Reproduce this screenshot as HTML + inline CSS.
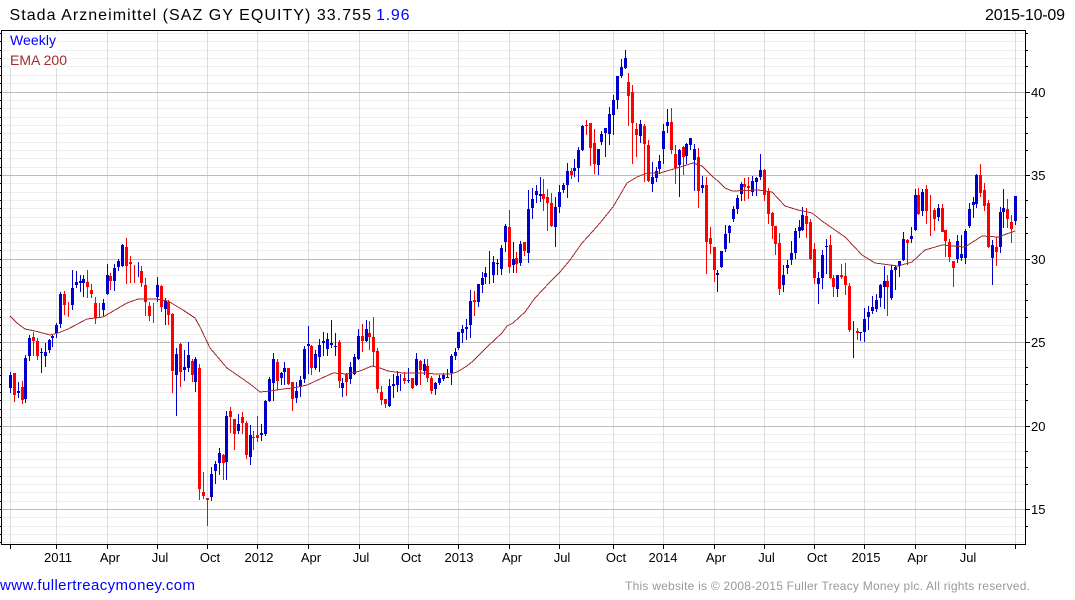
<!DOCTYPE html>
<html><head><meta charset="utf-8"><title>Stada Arzneimittel</title>
<style>
html,body{margin:0;padding:0;background:#fff;width:1075px;height:600px;overflow:hidden}
svg{display:block;position:absolute;left:0;top:0}
text{font-family:"Liberation Sans",Arial,sans-serif}
.c{shape-rendering:crispEdges;fill:none}
</style></head><body>
<svg width="1075" height="600" viewBox="0 0 1075 600" xmlns="http://www.w3.org/2000/svg">
<rect width="1075" height="600" fill="#fff"/>
<path class="c" stroke="#eee" d="M2 33.5H1025M2 41.5H1025M2 50.5H1025M2 58.5H1025M2 66.5H1025M2 75.5H1025M2 83.5H1025M2 100.5H1025M2 108.5H1025M2 117.5H1025M2 125.5H1025M2 133.5H1025M2 142.5H1025M2 150.5H1025M2 158.5H1025M2 167.5H1025M2 183.5H1025M2 192.5H1025M2 200.5H1025M2 208.5H1025M2 217.5H1025M2 225.5H1025M2 233.5H1025M2 242.5H1025M2 250.5H1025M2 267.5H1025M2 275.5H1025M2 284.5H1025M2 292.5H1025M2 300.5H1025M2 309.5H1025M2 317.5H1025M2 325.5H1025M2 334.5H1025M2 350.5H1025M2 359.5H1025M2 367.5H1025M2 375.5H1025M2 384.5H1025M2 392.5H1025M2 400.5H1025M2 409.5H1025M2 417.5H1025M2 434.5H1025M2 442.5H1025M2 451.5H1025M2 459.5H1025M2 467.5H1025M2 476.5H1025M2 484.5H1025M2 492.5H1025M2 501.5H1025M2 517.5H1025M2 526.5H1025M2 534.5H1025M2 542.5H1025"/>
<path class="c" stroke="#ddd" d="M10.5 31V544M56.5 31V544M107.5 31V544M157.5 31V544M207.5 31V544M257.5 31V544M308.5 31V544M359.5 31V544M408.5 31V544M458.5 31V544M509.5 31V544M559.5 31V544M613.5 31V544M663.5 31V544M714.5 31V544M764.5 31V544M814.5 31V544M864.5 31V544M915.5 31V544M965.5 31V544M1015.5 31V544"/>
<path class="c" stroke="#bbb" d="M2 92.5H1025M2 175.5H1025M2 259.5H1025M2 342.5H1025M2 426.5H1025M2 509.5H1025"/>
<rect x="10" y="32" width="47" height="19" fill="#fff"/>
<rect x="10" y="51" width="57" height="17" fill="#fff"/>

<path class="c" stroke="#0000cd" d="M10.5 372V393M18.5 382V398M25.5 355V403M29.5 335V361M41.5 348V373M45.5 343V367M49.5 339V353M52.5 335V347M56.5 323V338M60.5 292V328M72.5 270V310M76.5 271V288M80.5 275V292M83.5 275V297M103.5 299V316M107.5 264V295M114.5 264V291M118.5 259V271M122.5 244V267M138.5 262V277M157.5 277V302M165.5 298V325M176.5 348V416M184.5 350V381M188.5 342V372M195.5 357V392M211.5 467V501M215.5 461V484M219.5 448V475M226.5 411V480M238.5 414V434M250.5 425V465M261.5 424V441M265.5 400V436M269.5 377V402M273.5 353V401M281.5 372V385M284.5 362V385M296.5 382V403M300.5 376V397M304.5 346V383M308.5 326V374M315.5 350V370M319.5 339V372M323.5 332V356M327.5 333V356M331.5 320V348M335.5 333V356M342.5 378V397M350.5 362V384M354.5 354V375M358.5 329V360M366.5 320V342M389.5 379V407M393.5 374V398M397.5 371V392M400.5 374V391M408.5 368V383M416.5 353V386M424.5 359V375M435.5 382V395M439.5 375V385M443.5 373V381M447.5 369V378M451.5 354V385M455.5 348V360M458.5 332V350M462.5 325V343M466.5 319V340M470.5 290V338M478.5 284V307M482.5 272V293M485.5 267V284M489.5 251V284M493.5 256V283M497.5 259V275M501.5 245V275M505.5 224V252M513.5 242V273M520.5 241V266M528.5 190V263M532.5 188V219M536.5 185V203M540.5 177V202M555.5 197V247M559.5 185V213M563.5 183V193M567.5 163V198M574.5 159V177M578.5 147V182M582.5 125V151M598.5 149V175M601.5 131V145M605.5 128V157M609.5 107V145M613.5 95V135M617.5 76V109M621.5 59V78M625.5 50V69M640.5 120V143M652.5 162V192M656.5 167V182M659.5 155V174M663.5 124V164M667.5 109V133M679.5 149V197M686.5 143V164M690.5 138V150M694.5 144V191M702.5 176V193M717.5 270V292M721.5 251V268M725.5 225V252M729.5 225V243M733.5 206V222M737.5 195V214M741.5 182V201M752.5 176V196M756.5 177V196M760.5 154V180M783.5 265V292M787.5 260V274M791.5 241V265M795.5 228V259M799.5 220V238M802.5 207V231M818.5 272V304M822.5 250V289M826.5 239V274M837.5 275V297M853.5 321V358M860.5 332V341M864.5 308V342M868.5 306V330M872.5 296V314M876.5 294V312M880.5 284V307M884.5 266V309M891.5 265V300M895.5 265V290M899.5 261V277M903.5 232V261M911.5 227V243M915.5 189V231M922.5 189V216M938.5 204V221M957.5 235V263M961.5 235V261M965.5 229V264M969.5 203V228M973.5 197V218M976.5 174V208M992.5 240V285M1000.5 207V253M1003.5 189V228M1015.5 196V225"/>
<path class="c" stroke="#0000cd" stroke-width="3" d="M10.5 375V388M18.5 391V393M25.5 358V399M29.5 338V356M41.5 352V353M45.5 352V356M49.5 340V350M52.5 336V338M56.5 325V333M60.5 294V324M72.5 288V305M76.5 282V285M80.5 281V283M83.5 279V283M103.5 303V310M107.5 275V294M114.5 268V281M118.5 261V267M122.5 245V266M157.5 285V297M165.5 301V309M176.5 354V375M184.5 367V370M188.5 355V368M195.5 359V382M211.5 474V497M215.5 464V471M219.5 453V463M226.5 416V462M238.5 424V431M250.5 435V457M261.5 433V435M265.5 401V434M269.5 379V401M273.5 359V383M281.5 373V378M284.5 368V372M296.5 391V398M300.5 380V387M304.5 349V379M308.5 344V346M315.5 354V368M319.5 345V357M323.5 341V343M327.5 339V349M331.5 343V345M335.5 346V347M342.5 383V388M350.5 367V379M354.5 357V374M358.5 336V359M366.5 329V341M389.5 386V406M393.5 384V386M397.5 376V385M408.5 380V381M416.5 359V385M424.5 364V371M435.5 383V389M439.5 378V383M443.5 375V379M447.5 377V378M451.5 356V373M455.5 352V356M458.5 332V348M462.5 329V333M466.5 327V329M470.5 301V325M478.5 284V302M482.5 278V285M485.5 273V277M493.5 262V275M497.5 263V264M501.5 248V269M505.5 226V242M513.5 259V265M520.5 244V263M528.5 209V253M532.5 199V208M536.5 191V195M540.5 194V196M555.5 207V227M559.5 192V207M563.5 185V190M567.5 171V185M574.5 168V171M578.5 150V168M582.5 126V150M598.5 149V165M601.5 134V142M605.5 128V133M609.5 114V134M613.5 100V115M617.5 76V100M621.5 67V76M625.5 58V68M640.5 124V136M652.5 177V184M656.5 171V178M659.5 161V169M663.5 131V149M667.5 122V126M679.5 150V165M686.5 144V156M690.5 138V145M694.5 149V160M702.5 185V188M717.5 273V275M721.5 251V267M725.5 234V249M729.5 226V233M733.5 209V219M737.5 198V209M741.5 184V194M752.5 181V192M756.5 178V182M760.5 170V177M783.5 275V285M787.5 265V268M791.5 253V260M795.5 231V253M799.5 227V231M802.5 215V230M818.5 278V284M822.5 255V278M826.5 246V247M837.5 275V289M860.5 332V333M864.5 319V332M868.5 312V317M872.5 307V311M876.5 300V309M880.5 285V298M884.5 281V287M891.5 270V298M895.5 267V270M899.5 261V266M903.5 239V260M911.5 236V239M915.5 195V230M922.5 192V211M938.5 208V217M957.5 241V259M961.5 254V258M965.5 231V258M969.5 209V226M973.5 202V205M976.5 175V204M992.5 245V258M1000.5 212V247M1003.5 208V212M1015.5 196V221"/>

<path class="c" stroke="#f00" d="M14.5 373V402M22.5 381V404M33.5 332V356M37.5 338V360M64.5 291V315M68.5 302V317M87.5 270V298M91.5 284V298M95.5 297V324M99.5 303V317M110.5 273V290M126.5 238V284M130.5 256V283M134.5 265V283M141.5 266V287M145.5 278V316M149.5 302V321M153.5 303V323M161.5 285V312M168.5 300V325M172.5 313V393M180.5 343V387M192.5 359V382M199.5 364V500M203.5 472V499M207.5 498V526M223.5 454V480M230.5 407V433M234.5 419V450M242.5 412V434M246.5 421V459M253.5 431V450M257.5 416V442M277.5 359V390M288.5 368V385M292.5 382V411M311.5 345V375M339.5 340V388M346.5 373V396M362.5 324V352M369.5 321V350M373.5 317V367M377.5 348V393M381.5 386V405M385.5 399V408M404.5 372V384M412.5 378V389M420.5 360V385M427.5 359V382M431.5 376V394M474.5 291V316M509.5 210V273M516.5 252V273M524.5 242V256M543.5 179V211M547.5 189V231M551.5 193V227M571.5 168V179M586.5 120V135M590.5 123V166M594.5 129V174M628.5 73V126M632.5 85V164M636.5 123V157M644.5 124V182M648.5 140V182M671.5 108V154M675.5 145V184M683.5 146V175M698.5 148V208M706.5 177V274M710.5 227V254M714.5 247V282M744.5 178V201M748.5 177V199M764.5 169V201M768.5 188V224M772.5 212V239M775.5 226V255M779.5 233V295M806.5 208V238M810.5 219V260M814.5 243V284M830.5 235V279M833.5 275V297M841.5 264V279M845.5 263V295M849.5 283V332M857.5 328V340M887.5 275V316M907.5 239V265M918.5 188V215M926.5 185V224M930.5 195V236M934.5 208V231M942.5 204V232M945.5 230V257M949.5 239V262M953.5 261V287M980.5 164V197M984.5 183V211M988.5 200V248M996.5 237V266M1007.5 199V228M1011.5 215V243"/>
<path class="c" stroke="#f00" stroke-width="3" d="M14.5 373V395M22.5 387V400M33.5 337V341M37.5 341V356M64.5 294V305M87.5 282V287M91.5 290V294M95.5 303V318M110.5 276V281M126.5 247V266M130.5 262V264M141.5 271V283M145.5 285V302M149.5 306V316M161.5 286V307M168.5 302V315M172.5 314V371M180.5 344V372M192.5 361V375M199.5 368V489M203.5 492V496M207.5 498V500M223.5 455V463M230.5 411V417M234.5 419V434M242.5 417V423M246.5 423V455M253.5 437V438M257.5 435V438M277.5 362V381M288.5 368V384M292.5 382V399M311.5 346V368M339.5 342V381M346.5 374V382M362.5 336V341M369.5 333V337M373.5 337V352M377.5 351V389M381.5 392V400M385.5 399V404M404.5 378V381M412.5 378V388M420.5 361V370M427.5 366V378M431.5 378V391M474.5 300V302M509.5 227V267M516.5 258V264M524.5 242V251M543.5 194V199M547.5 197V203M551.5 203V226M571.5 171V175M586.5 125V126M590.5 123V148M594.5 143V164M628.5 82V96M632.5 92V123M636.5 129V135M644.5 126V144M648.5 145V181M671.5 122V150M675.5 154V168M683.5 147V157M698.5 157V191M706.5 185V242M710.5 238V244M714.5 247V270M744.5 184V187M748.5 186V188M764.5 170V195M768.5 192V214M772.5 213V226M775.5 226V244M779.5 243V289M806.5 216V224M810.5 222V259M814.5 249V278M830.5 245V278M833.5 278V287M841.5 275V277M845.5 276V285M849.5 286V330M857.5 331V333M887.5 281V287M907.5 240V243M918.5 195V214M926.5 189V211M934.5 210V219M942.5 208V232M945.5 230V241M949.5 242V257M953.5 261V268M980.5 175V193M984.5 190V206M988.5 203V247M996.5 247V252M1007.5 209V219M1011.5 222V229"/>

<polyline class="c" stroke="#a52a2a" stroke-width="1" points="10,316 17,323 25,329 35,331 50,335 58,333 68,329 87,319 103,317 115,310 127,303 138,299 155,299 168,301 183,310 195,318 200,327 210,348 227,368 240,377 250,384 260,392 270,391 283,389 293,388 307,385 320,379 333,373 347,374 360,371 372,366 380,368 388,371 403,373 427,373 435,374 450,374 457,372 467,366 473,361 487,347 502,333 507,326 513,323 525,312 535,298 550,282 560,272 570,260 582,243 593,231 600,223 613,207 627,183 637,177 647,173 660,173 677,168 693,163 702,166 713,177 718,181 725,188 732,191 758,190 772,192 785,206 798,210 812,213 822,221 845,237 862,255 875,263 898,266 912,262 925,250 942,245 965,247 982,236 998,237 1015,231"/>

<path class="c" stroke="#000" d="M1 30.5H1026M1 544.5H1026M1.5 30V545M1025.5 30V545"/>
<path class="c" stroke="#000" d="M10.5 544V549M56.5 544V549M107.5 544V549M157.5 544V549M207.5 544V549M257.5 544V549M308.5 544V549M359.5 544V549M408.5 544V549M458.5 544V549M509.5 544V549M559.5 544V549M613.5 544V549M663.5 544V549M714.5 544V549M764.5 544V549M814.5 544V549M864.5 544V549M915.5 544V549M965.5 544V549M1015.5 544V549"/>
<path class="c" stroke="#000" d="M1026 92.5H1030M1026 175.5H1030M1026 259.5H1030M1026 342.5H1030M1026 426.5H1030M1026 509.5H1030M1026 50.5H1028M1026 133.5H1028M1026 217.5H1028M1026 300.5H1028M1026 384.5H1028M1026 467.5H1028M1026 33.5H1028M1026 66.5H1028M1026 117.5H1028M1026 150.5H1028M1026 200.5H1028M1026 233.5H1028M1026 284.5H1028M1026 317.5H1028M1026 367.5H1028M1026 400.5H1028M1026 451.5H1028M1026 484.5H1028M1026 526.5H1028M0 33.5H2M0 41.5H2M0 50.5H2M0 58.5H2M0 66.5H2M0 75.5H2M0 83.5H2M0 92.5H2M0 100.5H2M0 108.5H2M0 117.5H2M0 125.5H2M0 133.5H2M0 142.5H2M0 150.5H2M0 158.5H2M0 167.5H2M0 175.5H2M0 183.5H2M0 192.5H2M0 200.5H2M0 208.5H2M0 217.5H2M0 225.5H2M0 233.5H2M0 242.5H2M0 250.5H2M0 259.5H2M0 267.5H2M0 275.5H2M0 284.5H2M0 292.5H2M0 300.5H2M0 309.5H2M0 317.5H2M0 325.5H2M0 334.5H2M0 342.5H2M0 350.5H2M0 359.5H2M0 367.5H2M0 375.5H2M0 384.5H2M0 392.5H2M0 400.5H2M0 409.5H2M0 417.5H2M0 426.5H2M0 434.5H2M0 442.5H2M0 451.5H2M0 459.5H2M0 467.5H2M0 476.5H2M0 484.5H2M0 492.5H2M0 501.5H2M0 509.5H2M0 517.5H2M0 526.5H2M0 534.5H2M0 542.5H2"/>

<text x="9.5" y="20" font-size="16" textLength="361.5" lengthAdjust="spacing" fill="#000">Stada Arzneimittel (SAZ GY EQUITY) 33.755</text>
<text x="376" y="20" font-size="16" textLength="33.5" lengthAdjust="spacing" fill="#00f">1.96</text>
<text x="985" y="20" font-size="16" textLength="80" lengthAdjust="spacing" fill="#000">2015-10-09</text>
<text x="10" y="45" font-size="14" textLength="46" lengthAdjust="spacing" fill="#00f">Weekly</text>
<text x="10" y="65" font-size="14" textLength="57" lengthAdjust="spacing" fill="#a52a2a">EMA 200</text>

<g font-size="13" fill="#000">
<text x="1031" y="97">40</text><text x="1031" y="180">35</text><text x="1031" y="264">30</text><text x="1031" y="347">25</text><text x="1031" y="431">20</text><text x="1031" y="514">15</text>
</g>
<g font-size="13" fill="#000" text-anchor="middle">
<text x="58" y="562">2011</text><text x="110" y="562">Apr</text><text x="160" y="562">Jul</text><text x="210" y="562">Oct</text><text x="259" y="562">2012</text><text x="311" y="562">Apr</text><text x="361" y="562">Jul</text><text x="411" y="562">Oct</text><text x="459" y="562">2013</text><text x="512" y="562">Apr</text><text x="562" y="562">Jul</text><text x="616" y="562">Oct</text><text x="663" y="562">2014</text><text x="716" y="562">Apr</text><text x="766.5" y="562">Jul</text><text x="817" y="562">Oct</text><text x="866" y="562">2015</text><text x="917.5" y="562">Apr</text><text x="968" y="562">Jul</text>
</g>
<text x="0" y="590" font-size="15" textLength="195" lengthAdjust="spacing" fill="#00f">www.fullertreacymoney.com</text>
<text x="625" y="590" font-size="12" textLength="405" lengthAdjust="spacing" fill="#999">This website is © 2008-2015 Fuller Treacy Money plc. All rights reserved.</text>
</svg>
</body></html>
